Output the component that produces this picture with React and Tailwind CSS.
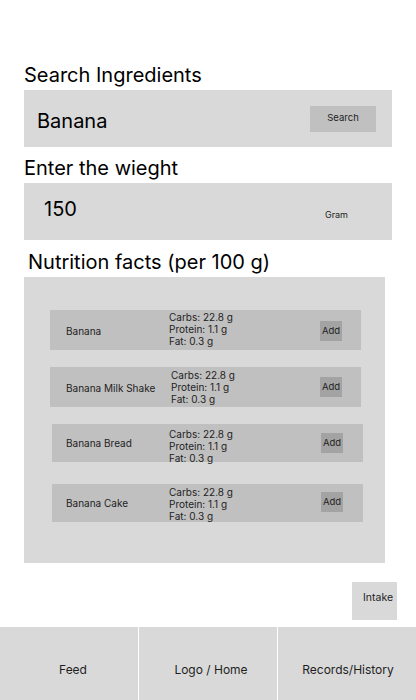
import React from 'react';

const foods = [
  {
    name: 'Banana',
    row: 'ml-[26px] mt-[33px] h-[40px] w-[311px]',
    nameCls: 'w-[119px] pl-[16px] mt-[2px]',
    macroCls: 'w-[151px] mt-[1px]',
    addCls: 'mt-[11px]',
  },
  {
    name: 'Banana Milk Shake',
    row: 'ml-[26px] mt-[17px] h-[40px] w-[311px]',
    nameCls: 'w-[121px] pl-[16px] mt-[2px]',
    macroCls: 'w-[149px] mt-[2px]',
    addCls: 'mt-[10px]',
  },
  {
    name: 'Banana Bread',
    row: 'ml-[28px] mt-[17px] h-[38px] w-[311px]',
    nameCls: 'w-[117px] pl-[14px] mt-0',
    macroCls: 'w-[152px] mt-[4px]',
    addCls: 'mt-[9px]',
  },
  {
    name: 'Banana Cake',
    row: 'ml-[28px] mt-[22px] h-[38px] w-[311px]',
    nameCls: 'w-[117px] pl-[14px] mt-0',
    macroCls: 'w-[152px] mt-[2px]',
    addCls: 'mt-[8px]',
  },
];

const FoodRow = ({ food }) => (
  <div className={`flex items-center bg-[#c0c0c0] ${food.row}`}>
    <div className={`text-[10px] leading-[13px] text-[#1e1e1e] ${food.nameCls}`}>{food.name}</div>
    <div className={`self-start text-[10px] leading-[12px] text-[#1e1e1e] ${food.macroCls}`}>
      <div>Carbs: 22.8 g</div>
      <div>Protein: 1.1 g</div>
      <div>Fat: 0.3 g</div>
    </div>
    <button
      className={`self-start w-[22px] h-[20px] bg-[#a3a3a3] text-[9.5px] text-[#1e1e1e] flex items-center justify-center ${food.addCls}`}
    >
      Add
    </button>
  </div>
);

export default function App() {
  return (
    <div className="w-[416px] h-[700px] bg-white flex flex-col text-black" style={{ fontFamily: 'Inter, "Noto Sans", sans-serif' }}>
      <div className="px-[24px] pt-[63px] flex flex-col">
        <label className="text-[20px] leading-[24px] mb-[3px]">Search Ingredients</label>
        <div className="h-[57px] bg-[#d9d9d9] flex items-center pl-[13px] pr-[16px]">
          <span className="text-[20px] leading-[24px] mt-[4px]">Banana</span>
          <button className="ml-auto w-[66px] h-[26px] bg-[#c0c0c0] text-[9.5px] text-[#1e1e1e] flex items-center justify-center">
            Search
          </button>
        </div>

        <label className="text-[20px] leading-[24px] mt-[9px] mb-[3px]">Enter the wieght</label>
        <div className="h-[57px] bg-[#d9d9d9] flex items-start pl-[20px]">
          <span className="text-[20px] leading-[24px] mt-[14px]">150</span>
          <span className="ml-auto mr-[44px] mt-[26px] text-[9px] leading-[12px] text-[#1e1e1e]">Gram</span>
        </div>

        <h2 className="text-[20px] leading-[24px] mt-[10px] mb-[3px] ml-[4px]">Nutrition facts (per 100 g)</h2>
        <div className="w-[361px] h-[286px] bg-[#d9d9d9] flex flex-col">
          {foods.map((f) => (
            <FoodRow key={f.name} food={f} />
          ))}
        </div>
      </div>

      <div className="flex justify-end pr-[19px] mt-[19px]">
        <button className="w-[45px] h-[38px] bg-[#d9d9d9] text-[10.5px] leading-[13px] text-[#1e1e1e] flex items-start pt-[9px] pl-[11px]">
          Intake
        </button>
      </div>

      <nav className="mt-auto h-[73px] grid grid-cols-[138px_138px_138px] gap-x-px bg-white">
        <div className="bg-[#d9d9d9] flex justify-center pt-[35px] text-[12px] leading-[16px] text-[#1e1e1e] pl-[8px]">Feed</div>
        <div className="bg-[#d9d9d9] flex justify-center pt-[35px] text-[12px] leading-[16px] text-[#1e1e1e] pl-[6px]">Logo / Home</div>
        <div className="bg-[#d9d9d9] flex justify-center pt-[35px] text-[12px] leading-[16px] text-[#1e1e1e] pl-[2px]">Records/History</div>
      </nav>
    </div>
  );
}
